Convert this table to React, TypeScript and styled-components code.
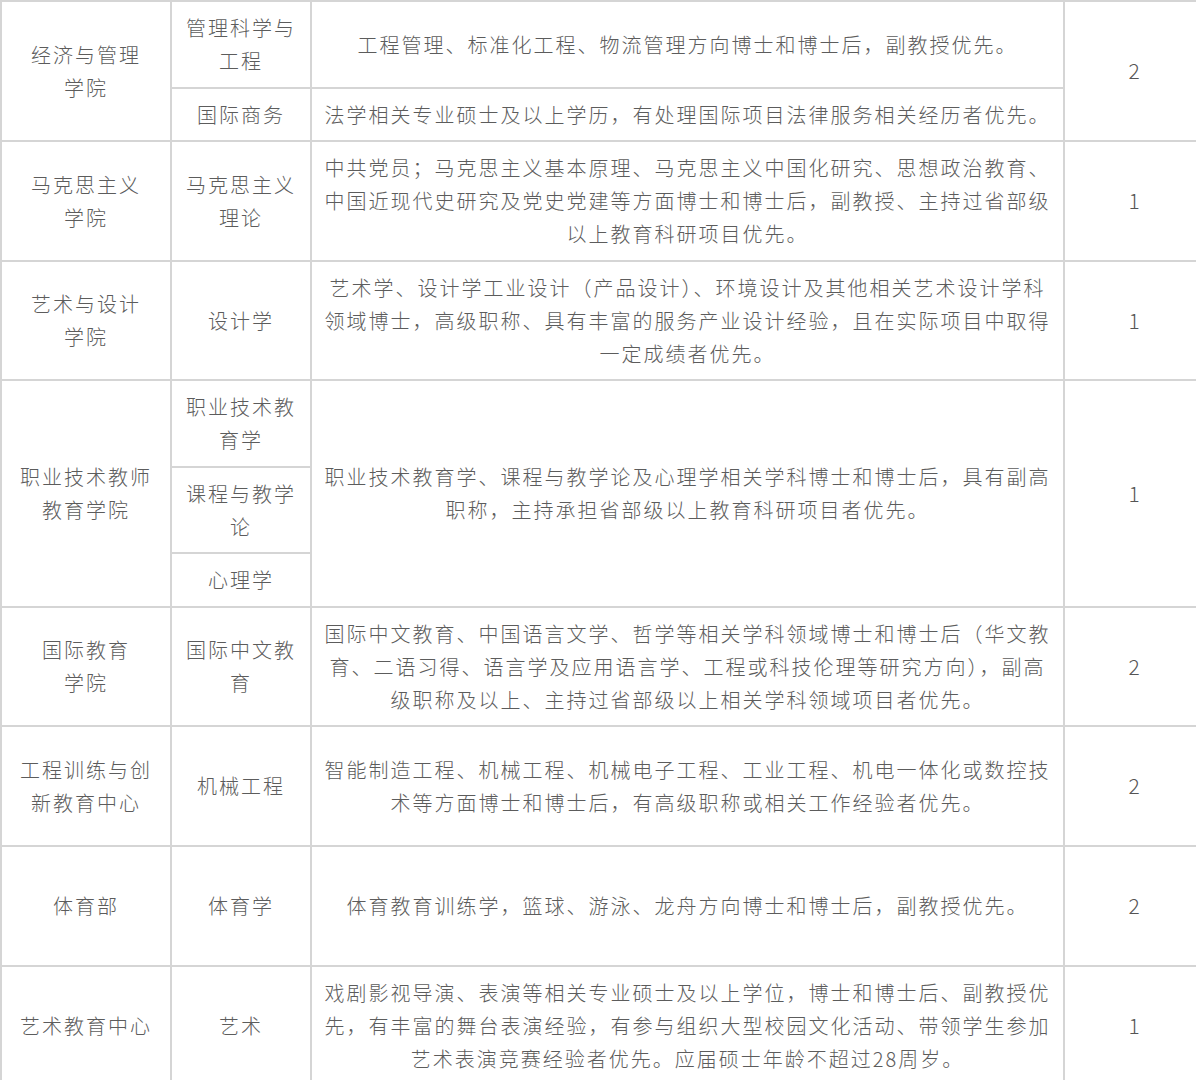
import React from 'react';
import styled, { createGlobalStyle } from 'styled-components';

const GlobalStyle = createGlobalStyle`
    html, body {
        margin: 0;
        padding: 0;
        background: #ffffff;
        overflow: hidden;
    }
`;

const Table = styled.table`
    width: 1203px;
    table-layout: fixed;
    border-collapse: collapse;
    font-family: "Noto Sans CJK SC", "Noto Sans", sans-serif;
    font-size: 20px;
    font-weight: 300;
    line-height: 33px;
    letter-spacing: 2px;
    color: #5c5c5c;
`;

const Row = styled.tr<{ $height?: number }>`
    height: ${p => (p.$height ? `${p.$height}px` : 'auto')};
`;

const Cell = styled.td`
    border: 2px solid #d5d5d5;
    padding: 9px 12px 9.5px;
    text-align: center;
    vertical-align: middle;
    word-break: break-all;
`;

const CountCell = styled(Cell)`
    letter-spacing: 0;
    font-size: 21px;
    color: #555555;
`;

type Entry = {
    college: string[];
    majors: string[];
    demand: string;
    count: number;
    height?: number;
};

const entries: Entry[] = [
    {
        college: ['经济与管理', '学院'],
        majors: ['管理科学与工程', '国际商务'],
        demand: '',
        count: 2,
    },
    {
        college: ['马克思主义', '学院'],
        majors: ['马克思主义理论'],
        demand: '中共党员；马克思主义基本原理、马克思主义中国化研究、思想政治教育、中国近现代史研究及党史党建等方面博士和博士后，副教授、主持过省部级以上教育科研项目优先。',
        count: 1,
    },
    {
        college: ['艺术与设计', '学院'],
        majors: ['设计学'],
        demand: '艺术学、设计学工业设计（产品设计）、环境设计及其他相关艺术设计学科领域博士，高级职称、具有丰富的服务产业设计经验，且在实际项目中取得一定成绩者优先。',
        count: 1,
    },
    {
        college: ['职业技术教师', '教育学院'],
        majors: ['职业技术教育学', '课程与教学论', '心理学'],
        demand: '职业技术教育学、课程与教学论及心理学相关学科博士和博士后，具有副高职称，主持承担省部级以上教育科研项目者优先。',
        count: 1,
    },
    {
        college: ['国际教育', '学院'],
        majors: ['国际中文教育'],
        demand: '国际中文教育、中国语言文学、哲学等相关学科领域博士和博士后（华文教育、二语习得、语言学及应用语言学、工程或科技伦理等研究方向），副高级职称及以上、主持过省部级以上相关学科领域项目者优先。',
        count: 2,
    },
    {
        college: ['工程训练与创', '新教育中心'],
        majors: ['机械工程'],
        demand: '智能制造工程、机械工程、机械电子工程、工业工程、机电一体化或数控技术等方面博士和博士后，有高级职称或相关工作经验者优先。',
        count: 2,
        height: 120,
    },
    {
        college: ['体育部'],
        majors: ['体育学'],
        demand: '体育教育训练学，篮球、游泳、龙舟方向博士和博士后，副教授优先。',
        count: 2,
        height: 120,
    },
    {
        college: ['艺术教育中心'],
        majors: ['艺术'],
        demand: '戏剧影视导演、表演等相关专业硕士及以上学位，博士和博士后、副教授优先，有丰富的舞台表演经验，有参与组织大型校园文化活动、带领学生参加艺术表演竞赛经验者优先。应届硕士年龄不超过28周岁。',
        count: 1,
        height: 120,
    },
];

const econDemands = [
    '工程管理、标准化工程、物流管理方向博士和博士后，副教授优先。',
    '法学相关专业硕士及以上学历，有处理国际项目法律服务相关经历者优先。',
];

const CollegeName = ({ lines }: { lines: string[] }) => (
    <>
        {lines.map((line, i) => (
            <React.Fragment key={i}>
                {i > 0 && <br />}
                {line}
            </React.Fragment>
        ))}
    </>
);

const renderEntry = (entry: Entry, index: number) => {
    const span = entry.majors.length;

    // 经管学院每个专业有各自的要求，其余学院共用一条
    if (index === 0) {
        return entry.majors.map((major, i) => (
            <Row key={`${index}-${i}`}>
                {i === 0 && (
                    <Cell rowSpan={span}>
                        <CollegeName lines={entry.college} />
                    </Cell>
                )}
                <Cell>{major}</Cell>
                <Cell>{econDemands[i]}</Cell>
                {i === 0 && <CountCell rowSpan={span}>{entry.count}</CountCell>}
            </Row>
        ));
    }

    return entry.majors.map((major, i) => (
        <Row key={`${index}-${i}`} $height={i === 0 ? entry.height : undefined}>
            {i === 0 && (
                <Cell rowSpan={span}>
                    <CollegeName lines={entry.college} />
                </Cell>
            )}
            <Cell>{major}</Cell>
            {i === 0 && <Cell rowSpan={span}>{entry.demand}</Cell>}
            {i === 0 && <CountCell rowSpan={span}>{entry.count}</CountCell>}
        </Row>
    ));
};

const App = () => {
    return (
        <>
            <GlobalStyle />
            <Table>
                <colgroup>
                    <col style={{ width: 170 }} />
                    <col style={{ width: 140 }} />
                    <col style={{ width: 753 }} />
                    <col style={{ width: 140 }} />
                </colgroup>
                <tbody>{entries.map(renderEntry)}</tbody>
            </Table>
        </>
    );
};

export default App;
